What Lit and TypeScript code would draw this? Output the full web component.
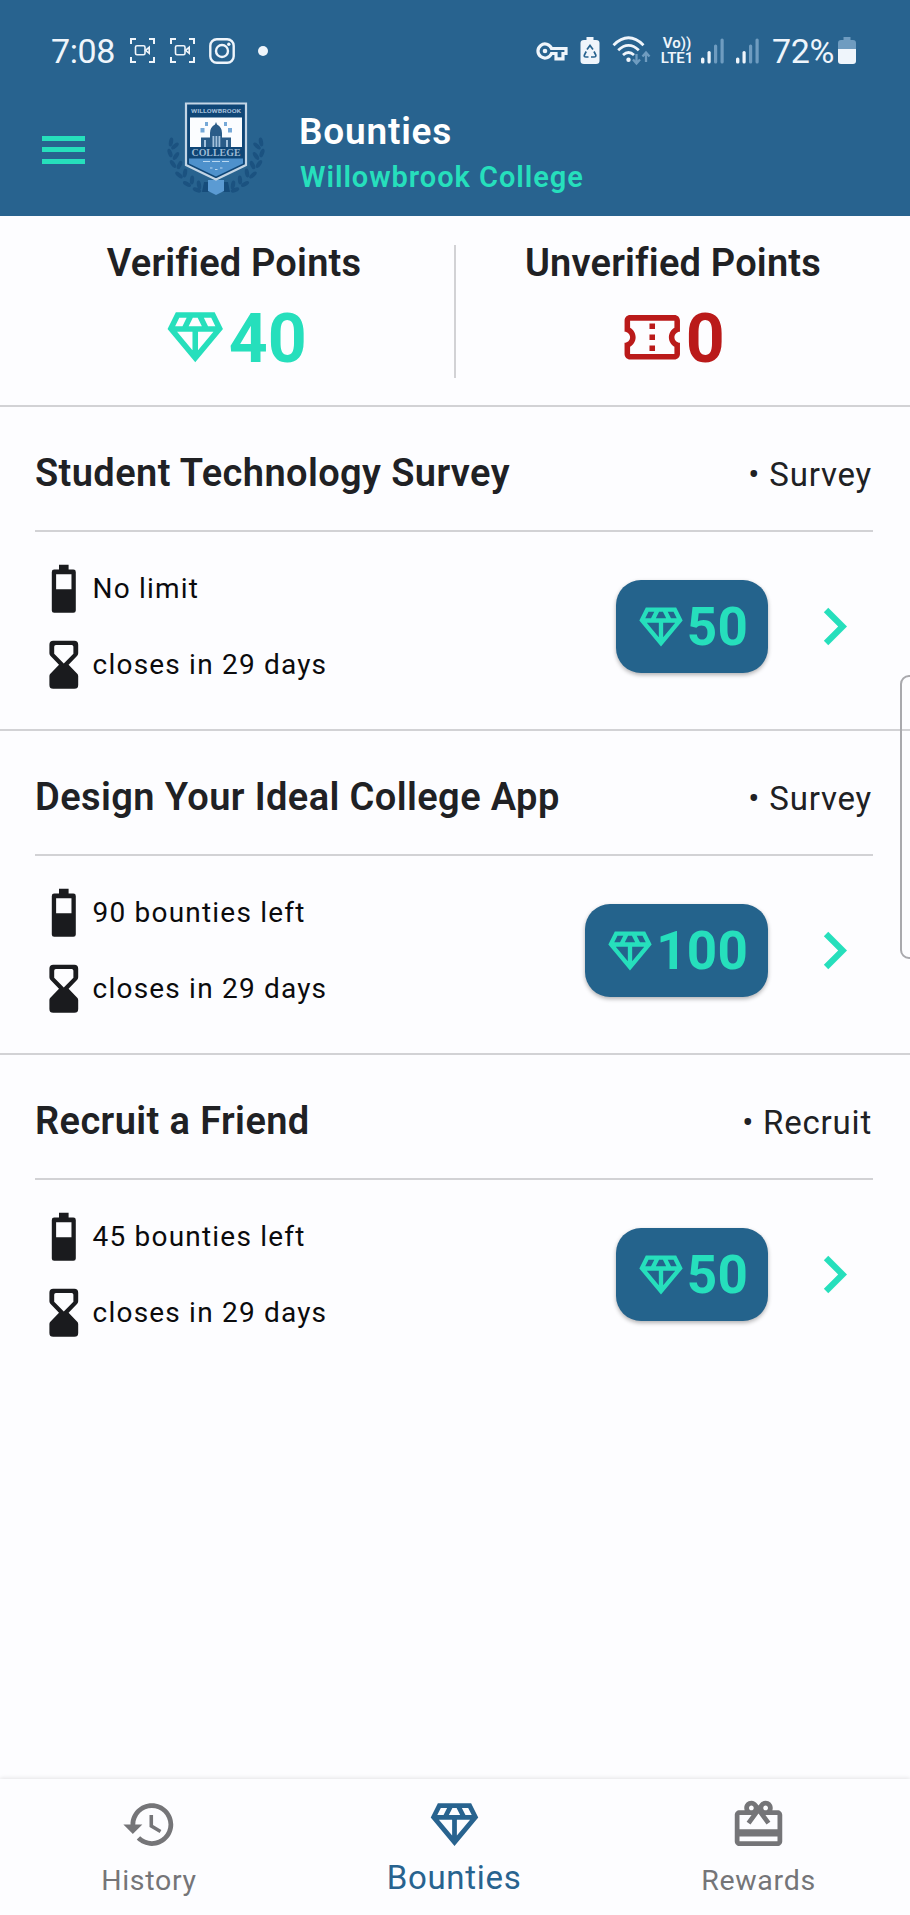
import { LitElement, html, css, svg } from "lit";
import { customElement, property, state } from "lit/decorators.js";
import { classMap } from "lit/directives/class-map.js";

type Bounty = {
  title: string;
  kind: string;
  limit: string;
  closes: string;
  points: number;
};

const icons = {
  diamond: svg`<path fill-rule="evenodd" d="M19 3H5L2 9l10 12L22 9zM9.62 8l1.5-3h1.76l1.5 3zM11 10v6.68L5.44 10zM13 10h5.56L13 16.68zM19.26 8h-2.65l-1.5-3h2.65zM6.24 5h2.65l-1.5 3H4.74z"/>`,
  ticket: svg`<path d="M22 10V6c0-1.11-.9-2-2-2H4c-1.1 0-1.99.89-1.99 2v4c1.1 0 1.99.9 1.99 2s-.89 2-2 2v4c0 1.1.9 2 2 2h16c1.1 0 2-.9 2-2v-4c-1.1 0-2-.9-2-2s.9-2 2-2zm-2-1.46c-1.19.69-2 1.99-2 3.46s.81 2.77 2 3.46V18H4v-2.54c1.19-.69 2-1.99 2-3.46 0-1.48-.8-2.77-1.99-3.46L4 6h16zM11 15h2v2h-2zm0-4h2v2h-2zm0-4h2v2h-2z"/>`,
  battery: svg`<path fill-rule="evenodd" d="M10 2h4v2h2q1 0 1 1v16q0 1-1 1H8q-1 0-1-1V5q0-1 1-1h2zM8.8 5.9v6.3h6.4V5.9z"/>`,
  hourglass: svg`<path fill-rule="evenodd" d="M7.6 2h8.8Q18 2 18 3.6V7.2q0 .6-.4 1L14 12l3.6 3.7q.4.4.4 1v3.7q0 1.6-1.6 1.6H7.6Q6 22 6 20.4v-3.7q0-.6.4-1L10 12 6.4 8.2Q6 7.8 6 7.2V3.6Q6 2 7.6 2zM8.7 3.8Q8 3.8 8 4.5V7.4l4 4.1 4-4.1V4.5q0-.7-.7-.7z"/>`,
  chevron: svg`<path d="M10 6 8.59 7.41 13.17 12l-4.58 4.59L10 18l6-6z"/>`,
  history: svg`<path d="M13 3c-4.97 0-9 4.03-9 9H1l3.89 3.89.07.14L9 12H6c0-3.87 3.13-7 7-7s7 3.13 7 7-3.13 7-7 7c-1.93 0-3.68-.79-4.94-2.06l-1.42 1.42C8.27 19.99 10.51 21 13 21c4.97 0 9-4.03 9-9s-4.03-9-9-9zm-1 5v5l4.28 2.54.72-1.21-3.5-2.08V8z"/>`,
  redeem: svg`<path d="M20 6h-2.18c.11-.31.18-.65.18-1 0-1.66-1.34-3-3-3-1.05 0-1.96.54-2.5 1.35l-.5.67-.5-.68C10.96 2.54 10.05 2 9 2 7.34 2 6 3.34 6 5c0 .35.07.69.18 1H4c-1.11 0-1.99.89-1.99 2L2 19c0 1.11.89 2 2 2h16c1.11 0 2-.89 2-2V8c0-1.11-.89-2-2-2zm-5-2c.55 0 1 .45 1 1s-.45 1-1 1-1-.45-1-1 .45-1 1-1zM9 4c.55 0 1 .45 1 1s-.45 1-1 1-1-.45-1-1 .45-1 1-1zm11 15H4v-2h16zm0-5H4V8h5.08L7 10.83 8.62 12 11 8.76l1-1.36 1 1.36L15.38 12 17 10.83 14.92 8H20z"/>`,
};

type IconName = keyof typeof icons;

@customElement("app-icon")
export class AppIcon extends LitElement {
  @property({ type: String }) name: IconName = "diamond";

  static styles = css`
    :host {
      display: block;
      flex: none;
    }

    .icon {
      display: block;
      width: 100%;
      height: 100%;
      fill: currentColor;
    }
  `;

  render() {
    return html`<svg class="icon" viewBox="0 0 24 24">${icons[this.name]}</svg>`;
  }
}

@customElement("status-bar")
export class StatusBar extends LitElement {
  static styles = css`
    :host {
      display: flex;
      align-items: center;
      justify-content: space-between;
      height: 101px;
      padding: 0 54px 0 51px;
      color: #eff5fb;
      font-size: 34px;
      letter-spacing: -0.4px;
    }

    .side {
      display: flex;
      align-items: center;
    }

    svg {
      display: block;
      flex: none;
      fill: none;
      stroke: currentColor;
    }

    .solid {
      fill: currentColor;
      stroke: none;
    }

    .dim {
      fill: #6f9cc0;
      stroke: none;
    }

    .dim-line {
      stroke: #6f9cc0;
    }

    .cut {
      stroke: #28638f;
    }

    .capture {
      margin-left: 15px;
    }

    .camera {
      margin-left: 14px;
    }

    .dot {
      width: 10px;
      height: 10px;
      margin-left: 23px;
      border-radius: 50%;
      background: currentColor;
    }

    .saver {
      margin-left: 12px;
    }

    .wifi {
      margin-left: 12px;
    }

    .volte {
      display: grid;
      justify-items: center;
      width: 34px;
      margin-left: 8px;
      padding-top: 1px;
      font-size: 15px;
      font-weight: 600;
      line-height: 15px;
      letter-spacing: 0;
    }

    .signal {
      margin-left: 7px;
    }

    .signal + .signal {
      margin-left: 11px;
    }

    .percent {
      margin-left: 12px;
    }

    .battery {
      margin-left: 4px;
    }
  `;

  captureIcon() {
    return html`
      <svg class="capture" width="25" height="25" viewBox="0 0 25 25" stroke-width="2">
        <path d="M1 6V1h5M19 1h5v5M24 19v5h-5M6 24H1v-5" />
        <rect x="5.5" y="7.8" width="9.5" height="9" rx="1.5" stroke-width="1.6" />
        <path d="M15.5 12.3l3.7-3v6z" stroke-width="1.6" />
      </svg>
    `;
  }

  signalIcon() {
    return html`
      <svg class="signal" width="24" height="26" viewBox="0 0 24 26">
        <rect class="solid" x="0" y="19.5" width="3.4" height="6" rx="1.5" />
        <rect class="solid" x="6.5" y="13" width="3.2" height="12.5" rx="1.5" />
        <rect class="dim" x="13" y="6.5" width="3.2" height="19" rx="1.5" />
        <rect class="dim" x="19.5" y="0.5" width="3.2" height="25" rx="1.5" />
      </svg>
    `;
  }

  render() {
    return html`
      <div class="side">
        <span>7:08</span>
        ${this.captureIcon()} ${this.captureIcon()}
        <svg class="camera" width="26" height="26" viewBox="0 0 26 26" stroke-width="2.4">
          <rect x="1.3" y="1.3" width="23.4" height="23.4" rx="6.5" />
          <circle cx="13" cy="13" r="6" />
          <circle class="solid" cx="19.8" cy="6.3" r="1.7" />
        </svg>
        <div class="dot"></div>
      </div>
      <div class="side">
        <svg width="32" height="20" viewBox="0 0 32 20" stroke-width="3.2">
          <path d="M15.5 7.5A7 7 0 1 0 15.5 12.5H20V17.8H27V12.5H30V7.5Z" />
          <circle class="solid" cx="9" cy="10" r="2.3" />
        </svg>
        <svg class="saver" width="20" height="28" viewBox="0 0 20 28">
          <path class="solid" d="M6.5 0h7v3H16q3.5 0 3.5 3v18q0 3-3.5 3H4Q.5 27 .5 24V6Q.5 3 4 3h2.5z" />
          <path class="cut" stroke-width="1.7" d="M7 12.5L10 8.5l3 4M14 14.5l1.8 3.5q.4 2-1.8 2h-3M8.5 20H6q-2.3 0-1.6-2l1.8-3.5" />
        </svg>
        <svg class="wifi" width="40" height="30" viewBox="0 0 40 30" stroke-width="2.8">
          <path d="M1.5 9.2Q16.5-5.5 31.5 9.2M6.2 14.2Q16.5 4.5 26.8 14.2M11 19Q16.5 14 22 19" />
          <circle class="solid" cx="16.5" cy="23.8" r="2.2" />
          <path class="dim-line" stroke-width="2.3" d="M24.5 18v9M21 23.5l3.5 4 3.5-4M34 26v-9M30.5 20.5l3.5-4 3.5 4" />
        </svg>
        <div class="volte">
          <div>Vo))</div>
          <div>LTE1</div>
        </div>
        ${this.signalIcon()} ${this.signalIcon()}
        <span class="percent">72%</span>
        <svg class="battery" width="18" height="28" viewBox="0 0 18 28">
          <path class="dim" d="M5.5 0h7v3H15q3 0 3 3v6H0V6q0-3 3-3h2.5z" />
          <path class="solid" d="M0 12h18v12q0 3-3 3H3q-3 0-3-3z" />
        </svg>
      </div>
    `;
  }
}

@customElement("college-crest")
export class CollegeCrest extends LitElement {
  static styles = css`
    :host {
      display: block;
      flex: none;
      width: 98px;
      height: 94px;
    }

    svg {
      display: block;
    }

    .leaf {
      fill: #1b5280;
    }

    .name {
      fill: #9fbcd6;
      font: 700 5.5px "Roboto", sans-serif;
    }

    .college {
      fill: #9dbad4;
      font: 700 10.5px "Liberation Serif", serif;
    }
  `;

  // One side of the laurel wreath; each entry is x, y, rotation.
  leaves = [
    [4, 40, 10],
    [8, 44, 50],
    [3, 51, -20],
    [9, 54, 35],
    [6, 62, -35],
    [12.5, 63, 25],
    [12, 73, -50],
    [18, 71, 10],
    [20, 82, -60],
    [25, 78, 5],
    [30, 88, -70],
    [32, 83, -10],
  ];

  wreath() {
    return this.leaves.map(
      ([x, y, r]) =>
        svg`<ellipse class="leaf" cx=${x} cy=${y} rx="2.1" ry="4.5" transform="rotate(${r} ${x} ${y})" />`,
    );
  }

  render() {
    return html`
      <svg width="98" height="94" viewBox="0 0 98 94">
        <g>${this.wreath()}</g>
        <g transform="translate(98 0) scale(-1 1)">${this.wreath()}</g>
        <path d="M37 80h24l2 10H35z" fill="#164c7a" />
        <path d="M41 78h16v11l-8 4-8-4z" fill="#5b9bd3" />
        <path d="M19 1.5h60V63L49 77.5 19 63z" fill="#0f4676" stroke="#c3d5e5" stroke-width="2.2" />
        <text class="name" x="49" y="11.3" text-anchor="middle" textLength="50" lengthAdjust="spacingAndGlyphs">WILLOWBROOK</text>
        <path d="M23 15.5h52v29.5H23z" fill="#fbfdff" />
        <path d="M34 45V35.5h9V31q0-6 5-8.5L49 20l1 2.5q5 2.5 5 8.5v4.5h9V45z" fill="#2a5c88" />
        <path d="M45.5 34h1.8v11h-1.8zM48.5 34h1.8v11h-1.8zM51.5 34h1.8v11h-1.8zM37 38h2v7h-2zM59 38h2v7h-2z" fill="#a4c2dc" />
        <path d="M38 20h3v4h-3zM57 20h3v4h-3zM33.5 26h4v4.5h-4zM61 26h4v4.5h-4z" fill="#76a9d8" />
        <text class="college" x="49" y="54" text-anchor="middle" textLength="49" lengthAdjust="spacingAndGlyphs">COLLEGE</text>
        <path d="M22 56.5h54V61.5L49 74.5 22 61.5z" fill="#4e91cc" />
        <path d="M36 59.5h7M45 59.5h8M55 59.5h7M43 66h2.5M48 67.5h2.5M53 66h2.5" stroke="#b9d8f1" stroke-width="1.2" />
      </svg>
    `;
  }
}

@customElement("bounty-card")
export class BountyCard extends LitElement {
  @property({ type: Object }) bounty!: Bounty;

  static styles = css`
    :host {
      display: flex;
      flex-direction: column;
      box-sizing: border-box;
      height: 324px;
      padding: 0 37px 0 35px;
      border-bottom: 2px solid #d2d2d5;
    }

    :host(:last-of-type) {
      border-bottom-color: transparent;
    }

    .head {
      display: flex;
      align-items: baseline;
      justify-content: space-between;
      box-sizing: border-box;
      height: 125px;
      padding-top: 44px;
      border-bottom: 2px solid #d2d2d5;
      color: #202124;
    }

    .title {
      font-size: 38px;
      font-weight: 600;
      line-height: 44px;
      letter-spacing: 0.4px;
    }

    .kind {
      padding-right: 1px;
      font-size: 33px;
      letter-spacing: 0.8px;
    }

    .body {
      display: flex;
      flex: 1;
      align-items: center;
      padding-bottom: 8px;
    }

    .facts {
      display: grid;
      gap: 18px;
      flex: 1;
      margin-top: 1px;
    }

    .fact {
      display: flex;
      align-items: center;
      height: 58px;
      font-size: 28px;
      letter-spacing: 1.2px;
      color: #0b0b0d;
    }

    .fact span {
      margin-bottom: 2px;
    }

    .fact app-icon {
      width: 57.6px;
      height: 57.6px;
      color: #1a1b1e;
    }

    .badge {
      display: flex;
      align-items: center;
      box-sizing: border-box;
      height: 93px;
      padding: 0 20px 0 19px;
      border-radius: 25px;
      background: #24638c;
      box-shadow: 0 2px 4px rgba(0, 0, 0, 0.3);
      color: #26dfbc;
      font-size: 53px;
      font-weight: 700;
      letter-spacing: 0.2px;
    }

    .badge app-icon {
      width: 52px;
      height: 52px;
    }

    .go {
      width: 75px;
      height: 75px;
      margin: 0 1px 0 29px;
      color: #26dfbc;
    }
  `;

  render() {
    return html`
      <div class="head">
        <div class="title">${this.bounty.title}</div>
        <div class="kind">• ${this.bounty.kind}</div>
      </div>
      <div class="body">
        <div class="facts">
          <div class="fact">
            <app-icon name="battery"></app-icon>
            <span>${this.bounty.limit}</span>
          </div>
          <div class="fact">
            <app-icon name="hourglass"></app-icon>
            <span>${this.bounty.closes}</span>
          </div>
        </div>
        <div class="badge">
          <app-icon name="diamond"></app-icon>
          <span>${this.bounty.points}</span>
        </div>
        <app-icon class="go" name="chevron"></app-icon>
      </div>
    `;
  }
}

@customElement("app-root")
export class AppRoot extends LitElement {
  @state() activeTab = "Bounties";

  bounties: Bounty[] = [
    {
      title: "Student Technology Survey",
      kind: "Survey",
      limit: "No limit",
      closes: "closes in 29 days",
      points: 50,
    },
    {
      title: "Design Your Ideal College App",
      kind: "Survey",
      limit: "90 bounties left",
      closes: "closes in 29 days",
      points: 100,
    },
    {
      title: "Recruit a Friend",
      kind: "Recruit",
      limit: "45 bounties left",
      closes: "closes in 29 days",
      points: 50,
    },
  ];

  tabs: { label: string; icon: IconName }[] = [
    { label: "History", icon: "history" },
    { label: "Bounties", icon: "diamond" },
    { label: "Rewards", icon: "redeem" },
  ];

  static styles = css`
    :host {
      display: flex;
      flex-direction: column;
      position: relative;
      width: 910px;
      height: 1915px;
      overflow: hidden;
      background: #fdfdff;
      font-family: "Roboto", sans-serif;
    }

    .header {
      height: 216px;
      background: #28638f;
    }

    .app-bar {
      display: flex;
      align-items: flex-start;
      padding-left: 42px;
    }

    .menu {
      display: grid;
      gap: 6.7px;
      width: 43px;
      margin: 34.5px 82px 0 0;
    }

    .menu-line {
      height: 5px;
      background: #26dfbc;
    }

    .app-bar college-crest {
      margin-top: 1px;
    }

    .titles {
      margin: 10px 0 0 34px;
    }

    .page-title {
      color: #ffffff;
      font-size: 37px;
      font-weight: 600;
      line-height: 42px;
      letter-spacing: 0.8px;
    }

    .school {
      margin: 4px 0 0 1px;
      color: #26dfbc;
      font-size: 29px;
      font-weight: 600;
      line-height: 40px;
      letter-spacing: 0.95px;
    }

    .points {
      display: grid;
      grid-template-columns: 440px 2px 434px;
      box-sizing: border-box;
      height: 191px;
      padding: 25px 0 0 14px;
      border-bottom: 2px solid #d2d2d5;
    }

    .divider {
      height: 133px;
      margin-top: 4px;
      background: #d2d2d5;
    }

    .total {
      text-align: center;
    }

    .label {
      color: #202124;
      font-size: 38px;
      font-weight: 600;
      line-height: 44px;
      letter-spacing: 0.2px;
    }

    .amount {
      display: flex;
      align-items: center;
      justify-content: center;
      margin-top: 14px;
      font-size: 68px;
      font-weight: 700;
      line-height: 80px;
    }

    .amount app-icon {
      width: 66.5px;
      height: 66.5px;
      margin-bottom: 3px;
    }

    .verified {
      color: #26dfbc;
    }

    .verified app-icon {
      margin-left: 1px;
    }

    .unverified {
      color: #ba1a1a;
    }

    .unverified app-icon {
      margin-left: -2px;
    }

    .list {
      flex: 1;
    }

    .edge-handle {
      position: absolute;
      top: 675px;
      right: -12px;
      box-sizing: border-box;
      width: 22px;
      height: 284px;
      border: 2px solid #a9a9ad;
      border-radius: 9px;
    }

    .nav {
      display: grid;
      grid-template-columns: 298px 312px 297px;
      height: 136px;
      box-shadow: 0 -1px 4px rgba(0, 0, 0, 0.1);
    }

    .tab {
      display: flex;
      flex-direction: column;
      align-items: center;
      padding-top: 17px;
      color: #757578;
      font-size: 28.5px;
      line-height: 36px;
      letter-spacing: 0.7px;
    }

    .tab app-icon {
      width: 57px;
      height: 57px;
      margin-bottom: 10px;
    }

    .active {
      color: #28638f;
      font-size: 33px;
      line-height: 29px;
    }
  `;

  render() {
    return html`
      <div class="header">
        <status-bar></status-bar>
        <div class="app-bar">
          <div class="menu">
            <div class="menu-line"></div>
            <div class="menu-line"></div>
            <div class="menu-line"></div>
          </div>
          <college-crest></college-crest>
          <div class="titles">
            <div class="page-title">Bounties</div>
            <div class="school">Willowbrook College</div>
          </div>
        </div>
      </div>
      <div class="points">
        <div class="total">
          <div class="label">Verified Points</div>
          <div class="amount verified">
            <app-icon name="diamond"></app-icon>
            <span>40</span>
          </div>
        </div>
        <div class="divider"></div>
        <div class="total">
          <div class="label">Unverified Points</div>
          <div class="amount unverified">
            <app-icon name="ticket"></app-icon>
            <span>0</span>
          </div>
        </div>
      </div>
      <div class="list">
        ${this.bounties.map((b) => html`<bounty-card .bounty=${b}></bounty-card>`)}
      </div>
      <div class="nav">
        ${this.tabs.map(
          (t) => html`
            <div
              class=${classMap({ tab: true, active: t.label === this.activeTab })}
              @click=${() => (this.activeTab = t.label)}
            >
              <app-icon name=${t.icon}></app-icon>
              <span>${t.label}</span>
            </div>
          `,
        )}
      </div>
      <div class="edge-handle"></div>
    `;
  }
}
